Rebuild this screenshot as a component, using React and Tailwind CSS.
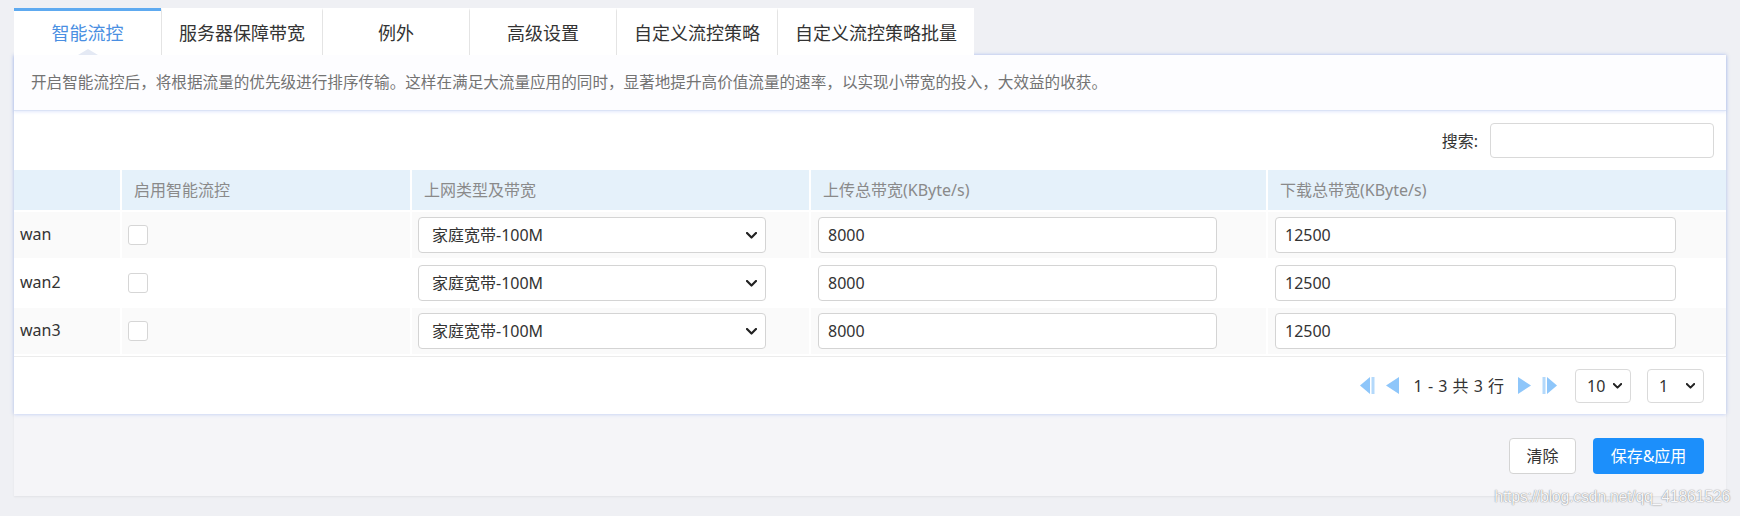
import React from "react";

const tabs = ["智能流控", "服务器保障带宽", "例外", "高级设置", "自定义流控策略", "自定义流控策略批量"];
const rows = [
  { name: "wan", bg: "bg-[#fafafa]" },
  { name: "wan2", bg: "bg-white" },
  { name: "wan3", bg: "bg-[#fafafa]" },
];

function Chevron({ w = 11, h = 7, stroke = 2.2 }) {
  return (
    <svg width={w} height={h} viewBox="0 0 11 7" fill="none">
      <path d="M1 1 L5.5 5.5 L10 1" stroke="#222" strokeWidth={stroke} strokeLinecap="round" strokeLinejoin="round" />
    </svg>
  );
}

function Tri({ dir = "left" }) {
  return (
    <svg width="13" height="17" viewBox="0 0 13 17">
      {dir === "left" ? (
        <polygon points="13,0 13,17 0,8.5" fill="#8ec6fa" />
      ) : (
        <polygon points="0,0 0,17 13,8.5" fill="#8ec6fa" />
      )}
    </svg>
  );
}

function First() {
  return (
    <svg width="15" height="17" viewBox="0 0 15 17">
      <polygon points="10,0 10,17 0,8.5" fill="#8ec6fa" />
      <rect x="11.5" y="0" width="3" height="17" fill="#b4d9fb" />
    </svg>
  );
}

function Last() {
  return (
    <svg width="15" height="17" viewBox="0 0 15 17">
      <rect x="0.5" y="0" width="3" height="17" fill="#b4d9fb" />
      <polygon points="5,0 5,17 15,8.5" fill="#8ec6fa" />
    </svg>
  );
}

export default function App() {
  return (
    <div className="relative w-[1740px] h-[516px] bg-[#eff0f4] pt-[8px] px-[14px] font-['Noto_Sans','Noto_Sans_CJK_SC',sans-serif] overflow-hidden">
      {/* Tabs */}
      <div className="flex h-[47px]">
        {tabs.map((t, i) =>
          i === 0 ? (
            <div
              key={t}
              className="relative flex items-center justify-center min-w-[147px] px-[17px] bg-white border-t-[3px] border-t-[#5eaaf0] text-[18px] text-[#4a8fe2]"
            >
              {t}
              <div className="absolute bottom-0 left-1/2 -translate-x-1/2 w-0 h-0 border-x-[10px] border-x-transparent border-b-[6px] border-b-[#e4e9f4]" />
            </div>
          ) : (
            <div
              key={t}
              className="flex items-center justify-center min-w-[147px] px-[17px] bg-white border-t-[3px] border-t-white border-l border-l-[#e4e4e4] text-[18px] text-[#333]"
            >
              {t}
            </div>
          )
        )}
      </div>

      {/* Card */}
      <div className="bg-[#f5f5f8] shadow-[0_1px_2px_rgba(0,0,0,0.06)]">
        <div className="bg-white shadow-[0_0_4px_rgba(90,130,235,0.4)]">
          <div className="h-[56px] flex items-center pl-[17px] text-[15.6px] text-[#737373] bg-[#fdfdff] border-b border-b-[#dbe3f6] shadow-[0_1px_3px_rgba(90,130,235,0.18)]">
            开启智能流控后，将根据流量的优先级进行排序传输。这样在满足大流量应用的同时，显著地提升高价值流量的速率，以实现小带宽的投入，大效益的收获。
          </div>

          <div className="h-[59px] flex items-center justify-end pr-[12px] gap-[12px]">
            <span className="text-[16px] text-[#333]">搜索:</span>
            <input className="w-[224px] h-[35px] border border-[#d9d9d9] rounded-[4px] bg-white outline-none px-2" />
          </div>

          <div className="grid grid-cols-[106px_288px_397px_455px_458px] gap-[2px] text-[16px]">
            <div className="h-[40px] bg-[#e5f1fa]" />
            <div className="h-[40px] bg-[#e5f1fa] flex items-center pl-[12px] text-[#8a8a8a]">启用智能流控</div>
            <div className="h-[40px] bg-[#e5f1fa] flex items-center pl-[12px] text-[#8a8a8a]">上网类型及带宽</div>
            <div className="h-[40px] bg-[#e5f1fa] flex items-center pl-[12px] text-[#8a8a8a]">上传总带宽(KByte/s)</div>
            <div className="h-[40px] bg-[#e5f1fa] flex items-center pl-[12px] text-[#8a8a8a]">下载总带宽(KByte/s)</div>
            {rows.map((r) => (
              <React.Fragment key={r.name}>
                <div className={`h-[46px] ${r.bg} flex items-center pl-[6px] pb-[2px] text-[#333]`}>{r.name}</div>
                <div className={`h-[46px] ${r.bg} flex items-center pl-[6px]`}>
                  <div className="w-[20px] h-[20px] border border-[#d6d6d6] rounded-[3px] bg-white" />
                </div>
                <div className={`h-[46px] ${r.bg} flex items-center pl-[6px]`}>
                  <div className="w-[348px] h-[36px] border border-[#d4d4d4] rounded-[4px] bg-white flex items-center justify-between pl-[13px] pr-[8px] text-[#333]">
                    <span>家庭宽带-100M</span>
                    <Chevron />
                  </div>
                </div>
                <div className={`h-[46px] ${r.bg} flex items-center pl-[7px]`}>
                  <input
                    readOnly
                    value="8000"
                    className="w-[399px] h-[36px] border border-[#d4d4d4] rounded-[4px] bg-white pl-[9px] text-[16px] text-[#333] outline-none"
                  />
                </div>
                <div className={`h-[46px] ${r.bg} flex items-center pl-[7px]`}>
                  <input
                    readOnly
                    value="12500"
                    className="w-[401px] h-[36px] border border-[#d4d4d4] rounded-[4px] bg-white pl-[9px] text-[16px] text-[#333] outline-none"
                  />
                </div>
              </React.Fragment>
            ))}
          </div>
          <div className="mt-[2px] h-[1px] bg-[#ececec]" />

          <div className="h-[57px] flex items-center justify-end pr-[22px] text-[16px] text-[#333]">
            <First />
            <div className="ml-[11px]"><Tri dir="left" /></div>
            <span className="ml-[15px] [word-spacing:1px]">1 - 3 共 3 行</span>
            <div className="ml-[14px]"><Tri dir="right" /></div>
            <div className="ml-[11px]"><Last /></div>
            <div className="ml-[18px] w-[56px] h-[34px] border border-[#dadada] rounded-[4px] flex items-center justify-between pl-[11px] pr-[8px]">
              <span>10</span>
              <Chevron w={9} h={6} stroke={2.4} />
            </div>
            <div className="ml-[16px] w-[57px] h-[34px] border border-[#dadada] rounded-[4px] flex items-center justify-between pl-[11px] pr-[8px]">
              <span>1</span>
              <Chevron w={9} h={6} stroke={2.4} />
            </div>
          </div>
        </div>

        <div className="h-[82px] flex items-start justify-end pt-[24px] pr-[22px] gap-[17px]">
          <button className="w-[67px] h-[36px] border border-[#d4d4d4] rounded-[4px] bg-white text-[16px] text-[#333]">清除</button>
          <button className="w-[111px] h-[36px] rounded-[4px] bg-[#1c8ffb] text-[16px] text-white">保存&amp;应用</button>
        </div>
      </div>

      <div className="absolute right-[10px] bottom-[8px] text-[16px] tracking-[-0.3px] leading-[22px] font-['Liberation_Sans',sans-serif] text-[#f7f7f9] [text-shadow:0_0_1px_rgba(0,0,0,0.5),0_0_2px_rgba(0,0,0,0.15)]">
        https://blog.csdn.net/qq_41861526
      </div>
    </div>
  );
}
